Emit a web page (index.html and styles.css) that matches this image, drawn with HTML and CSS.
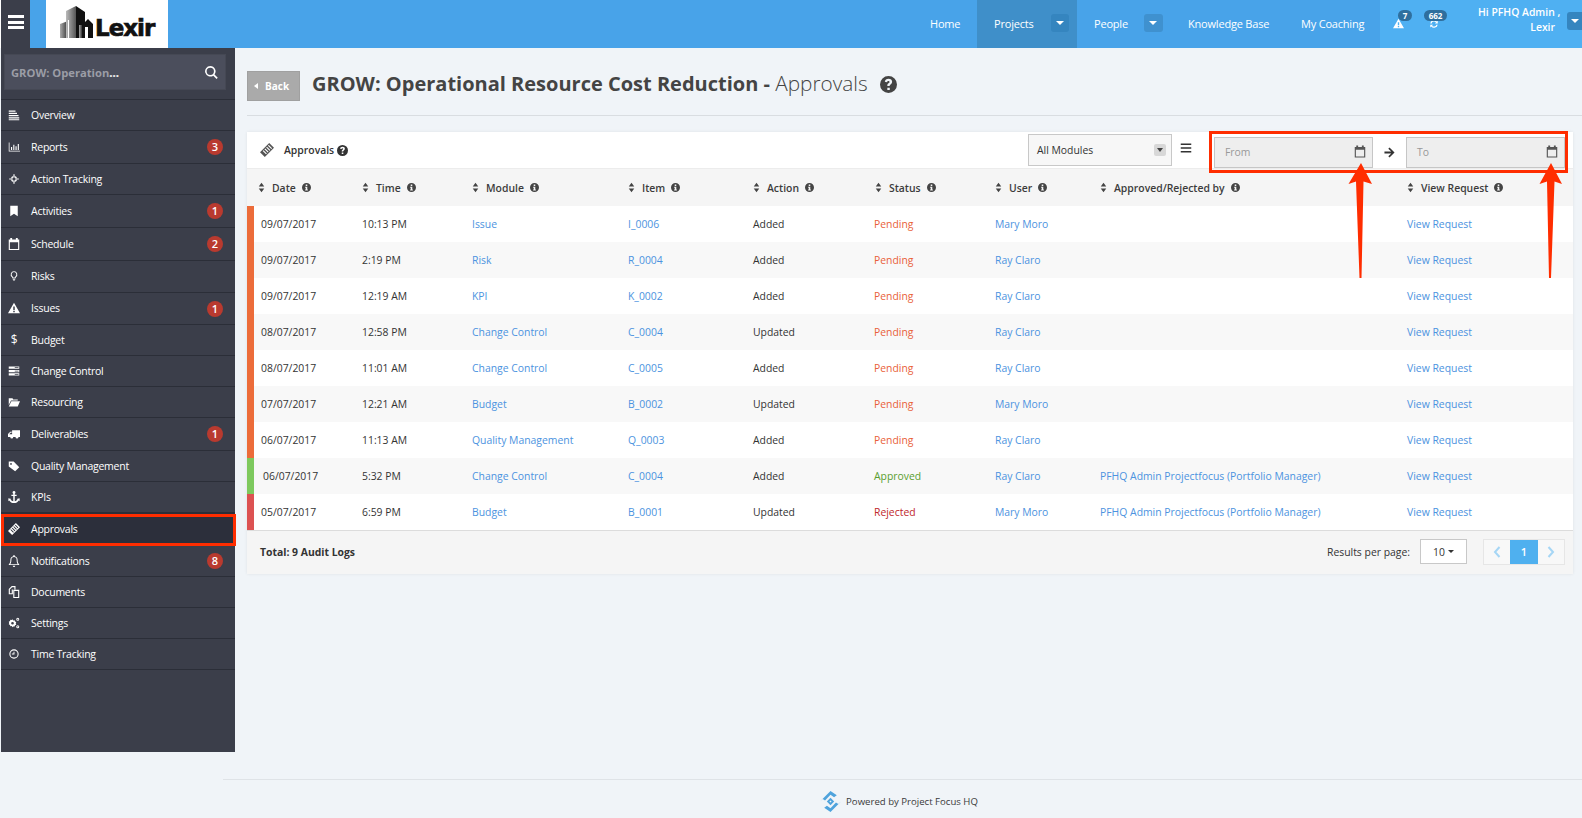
FILE: index.html
```html
<!DOCTYPE html>
<html lang="en">
<head>
<meta charset="utf-8">
<title>Approvals</title>
<link rel="stylesheet" href="styles.css">
</head>
<body>
<svg class="defs" width="0" height="0" aria-hidden="true">
  <defs>
    <linearGradient id="g-tower" x1="0" y1="0" x2="1" y2="0"><stop offset="0" stop-color="#bbb"/><stop offset="1" stop-color="#555"/></linearGradient>
    <linearGradient id="g-small" x1="0" y1="0" x2="1" y2="0"><stop offset="0" stop-color="#aaa"/><stop offset="1" stop-color="#333"/></linearGradient>
  </defs>
  <symbol id="i-info" viewBox="0 0 16 16"><path fill-rule="evenodd" d="M8 0a8 8 0 1 1 0 16A8 8 0 0 1 8 0zM6.600 2.600v2.600h2.800V2.600zM5.600 6.600v1.800h1v3H5.600v1.900h4.800v-1.900h-1V6.600z"/></symbol>
  <symbol id="i-help" viewBox="0 0 16 16"><path fill-rule="evenodd" d="M8 0a8 8 0 1 1 0 16A8 8 0 0 1 8 0zM6.900 11v2.200h2.300V11zM8 2.700c-2 0-3.200 1-3.500 2.700l2.100.5c.2-.9.6-1.300 1.300-1.300s1.100.4 1.100 1c0 .5-.3.8-1 1.300-.9.7-1.100 1.300-1.100 2.200v.4h2.200V9.200c0-.5.2-.7.8-1.200.9-.7 1.500-1.400 1.500-2.600 0-1.700-1.300-2.700-3.400-2.700z"/></symbol>
  <symbol id="i-sort" viewBox="0 0 10 16"><path d="M5 1l4 5.500H1zM5 15L1 9.500h8z"/></symbol>
  <symbol id="i-tag" viewBox="0 0 16 16"><path fill-rule="evenodd" d="M10.500 0L16 5.500 5.500 16 0 10.500zM10 2.200L9.100 3.100l3.800 3.800.9-.9zM8 4.200l-.9.9 3.800 3.800.9-.9zM6 6.200l-.9.9 3.800 3.800.9-.9zM4 8.200l-.9.9 3.800 3.800.9-.9z"/></symbol>
  <symbol id="i-cal" viewBox="0 0 16 16"><path fill-rule="evenodd" d="M3 0h2.500v2h5V0H13v2h2v14H1V2h2zM2.500 5.500v9h11v-9z"/></symbol>
  <symbol id="i-list" viewBox="0 0 16 16"><path d="M1 2h14v2H1zM1 7h14v2H1zM1 12h14v2H1z"/></symbol>
  <symbol id="i-overview" viewBox="0 0 16 16"><path d="M1 2h9v1.500H1zM1 5h11v1.500H1zM1 8h13v1.500H1zM1 11h14v1.500H1zM1 13.500h14V15H1z"/></symbol>
  <symbol id="i-chart" viewBox="0 0 16 16"><path d="M1 2h1v11h14v1H1zM4 8h1.500v4H4zM7 5h1.500v7H7zM10 7h1.500v5H10zM13 4h1.500v8H13z"/></symbol>
  <symbol id="i-target" viewBox="-2 -2 20 20"><path fill-rule="evenodd" d="M8 3a5 5 0 1 1 0 10A5 5 0 0 1 8 3zm0 2.200a2.800 2.800 0 1 0 0 5.600 2.800 2.800 0 0 0 0-5.600zM7 0h2v4H7zM7 12h2v4H7zM0 7h4v2H0zM12 7h4v2h-4z"/></symbol>
  <symbol id="i-bookmark" viewBox="0 0 16 16"><path d="M3 1h10v14l-5-3.500L3 15z"/></symbol>
  <symbol id="i-bulb" viewBox="-2 -2 20 20"><path fill-rule="evenodd" d="M8 0a5.500 5.500 0 0 1 3.200 10l-.7 2h-5l-.7-2A5.500 5.500 0 0 1 8 0zm0 1.500a4 4 0 0 0-2.200 7.300l.8 1.700h2.800l.8-1.700A4 4 0 0 0 8 1.500zM6 13h4v1.200H6zM7 14.600h2V16H7z"/></symbol>
  <symbol id="i-warn" viewBox="0 0 16 16"><path fill-rule="evenodd" d="M8 1l8 14H0zM7 6v4.500h2V6zM7 11.500v2h2v-2z"/></symbol>
  <symbol id="i-bars" viewBox="0 0 16 16"><path fill-rule="evenodd" d="M1 2h14v3H1zM1 6.500h14v3H1zM1 11h14v3H1zM9 3v1h5V3zM9 7.500v1h5v-1zM9 12v1h5v-1z"/></symbol>
  <symbol id="i-folder" viewBox="0 0 16 16"><path d="M1 3h5l1 1.500h6V6H4L1 12zM4.500 7H16l-3 7H1z"/></symbol>
  <symbol id="i-truck" viewBox="0 0 16 16"><path fill-rule="evenodd" d="M5.500 3H16v9h-2a2 2 0 0 1-4 0H7a2 2 0 0 1-4 0H0V8l3-3h2.500zM4 6L1.500 8.300H5.500V6z"/></symbol>
  <symbol id="i-label" viewBox="0 0 16 16"><path fill-rule="evenodd" d="M1 2h6.500L15 9.500 9.500 15 1 8.500zM4 4a1.200 1.200 0 1 0 0 2.400A1.200 1.200 0 0 0 4 4z"/></symbol>
  <symbol id="i-anchor" viewBox="0 0 16 16"><path fill-rule="evenodd" d="M8 0a2 2 0 0 1 1 3.700V5h2.500v1.500H9v7c1.700-.2 3-1 3.700-2.200L11.500 10.500 15.500 9.500v4l-1.200-.9C13.200 14.800 10.800 16 8 16s-5.200-1.200-6.300-3.400l-1.200.9v-4l4 1-1.200.8C4 12.500 5.300 13.300 7 13.500v-7H4.500V5H7V3.700A2 2 0 0 1 8 0z"/></symbol>
  <symbol id="i-bell" viewBox="0 0 16 16"><path fill-rule="evenodd" d="M8 0c.6 0 1 .4 1 1v.6c2.400.5 3.800 2.300 3.800 4.900 0 3.700 1.200 4.900 2.200 6v.8H1v-.8c1-1.100 2.200-2.300 2.200-6 0-2.600 1.400-4.400 3.800-4.900V1c0-.6.400-1 1-1zm0 2.800c-2.200 0-3.500 1.400-3.500 3.700 0 2.700-.6 4.400-1.500 5.700h10c-.9-1.300-1.500-3-1.500-5.700 0-2.300-1.300-3.700-3.500-3.700zM6.300 14.200h3.400a1.700 1.700 0 0 1-3.400 0z"/></symbol>
  <symbol id="i-docs" viewBox="0 0 16 16"><path fill-rule="evenodd" d="M5 0h5v4.500H6.500V11H1V4zM5.500 1.500L2.500 4.700V9.500h2.500V4.500H8.500v-3zM7 5h8v11H7zM8.500 6.500v8h5v-8z"/></symbol>
  <symbol id="i-gears" viewBox="0 0 16 16"><path fill-rule="evenodd" d="M6 3l1 1.500 1.800-.3.600 1.700 1.600.9-.6 1.700.6 1.700-1.600.9-.6 1.700-1.800-.3L6 13.500l-1-1.500-1.800.3-.6-1.700L1 9.700 1.600 8 1 6.300l1.600-.9.600-1.700L5 4zm0 3.500a1.800 1.800 0 1 0 0 3.600 1.800 1.800 0 0 0 0-3.600zM13 1a2 2 0 1 1 0 4 2 2 0 0 1 0-4zm0 1.200a.8.800 0 1 0 0 1.600.8.800 0 0 0 0-1.600zM13 11a2 2 0 1 1 0 4 2 2 0 0 1 0-4zm0 1.200a.8.800 0 1 0 0 1.600.8.800 0 0 0 0-1.600z"/></symbol>
  <symbol id="i-clock" viewBox="-1 -1 18 18"><path fill-rule="evenodd" d="M8 1a7 7 0 1 1 0 14A7 7 0 0 1 8 1zm0 1.600a5.400 5.400 0 1 0 0 10.800A5.400 5.400 0 0 0 8 2.600zM7.300 4.500h1.400v4.200H4.800V7.400h2.500z"/></symbol>
  <symbol id="i-search" viewBox="0 0 16 16"><path fill-rule="evenodd" d="M6.500 0a6.500 6.500 0 0 1 5.200 10.400l4 4-1.500 1.500-4-4A6.500 6.500 0 1 1 6.500 0zm0 2a4.500 4.500 0 1 0 0 9 4.500 4.500 0 0 0 0-9z"/></symbol>
  <symbol id="i-refresh" viewBox="0 0 16 16"><path d="M8 2a6 6 0 0 1 4.500 2L14 2.500V7H9.500l1.600-1.600A4 4 0 0 0 4.200 7H2.100A6 6 0 0 1 8 2zM2 9h4.500l-1.600 1.600A4 4 0 0 0 11.800 9h2.100A6 6 0 0 1 3.500 12L2 13.500z"/></symbol>
</svg>

<header class="topbar">
  <button class="burger" type="button" aria-label="Menu"><span></span><span></span><span></span></button>
  <div class="logo">
    <svg class="logo-mark" viewBox="0 0 33 32" width="33" height="32">
      <path fill="url(#g-small)" d="M0 18l8-3v17H0z"/>
      <path fill="url(#g-tower)" d="M6 5l10-5v32H6z"/>
      <path fill="#111" d="M16 0l9 6v10l3-3 5 5v14h-5V21h-3v11h-9z"/>
      <path fill="url(#g-small)" d="M19 19h3v13h-3z"/>
      <path fill="#fff" d="M8 14h1v18H8z"/>
    </svg>
    <span class="logo-text">Lexir</span>
  </div>
  <nav class="mainnav">
    <a class="nav-home">Home</a>
    <a class="nav-projects">Projects<span class="caret-btn"></span></a>
    <a class="nav-people">People<span class="caret-btn"></span></a>
    <a class="nav-kb">Knowledge Base</a>
    <a class="nav-coach">My Coaching</a>
  </nav>
  <div class="userzone">
    <div class="notif notif-alert"><svg class="ic-notif"><use href="#i-warn"/></svg><span class="pill">7</span></div>
    <div class="notif notif-sync"><svg class="ic-notif"><use href="#i-refresh"/></svg><span class="pill">662</span></div>
    <div class="hello">Hi PFHQ Admin ,<br>Lexir</div>
    <span class="caret-btn user-caret"></span>
  </div>
</header>

<div class="middle">
  <aside class="sidebar">
    <div class="searchwrap">
      <div class="search"><span class="search-text">GROW: Operation<b>...</b></span><svg class="ic-search"><use href="#i-search"/></svg></div>
    </div>
    <ul class="menu">
      <li class="h31"><svg><use href="#i-overview"/></svg>Overview</li>
      <li class="h33"><svg><use href="#i-chart"/></svg>Reports<span class="badge">3</span></li>
      <li class="h31"><svg><use href="#i-target"/></svg>Action Tracking</li>
      <li class="h33"><svg><use href="#i-bookmark"/></svg>Activities<span class="badge">1</span></li>
      <li class="h33"><svg><use href="#i-cal"/></svg>Schedule<span class="badge">2</span></li>
      <li class="h32"><svg><use href="#i-bulb"/></svg>Risks</li>
      <li class="h32"><svg><use href="#i-warn"/></svg>Issues<span class="badge">1</span></li>
      <li class="h31"><span class="glyph">$</span>Budget</li>
      <li class="h31"><svg><use href="#i-bars"/></svg>Change Control</li>
      <li class="h31"><svg><use href="#i-folder"/></svg>Resourcing</li>
      <li class="h33"><svg><use href="#i-truck"/></svg>Deliverables<span class="badge">1</span></li>
      <li class="h31"><svg><use href="#i-label"/></svg>Quality Management</li>
      <li class="h31"><svg><use href="#i-anchor"/></svg>KPIs</li>
      <li class="h33 active"><svg><use href="#i-tag"/></svg>Approvals</li>
      <li class="h31"><svg><use href="#i-bell"/></svg>Notifications<span class="badge">8</span></li>
      <li class="h31"><svg><use href="#i-docs"/></svg>Documents</li>
      <li class="h31"><svg><use href="#i-gears"/></svg>Settings</li>
      <li class="h31"><svg><use href="#i-clock"/></svg>Time Tracking</li>
    </ul>
  </aside>

  <main class="main">
    <div class="pagehead">
      <button class="back" type="button"><i class="back-caret"></i>Back</button>
      <h1 class="title"><b>GROW: Operational Resource Cost Reduction -</b> <span class="title-page">Approvals</span></h1>
      <svg class="ic-title"><use href="#i-help"/></svg>
    </div>

    <section class="card">
      <div class="cardhead">
        <svg class="ic-head"><use href="#i-tag"/></svg>
        <span class="cardtitle">Approvals</span>
        <svg class="ic-help"><use href="#i-help"/></svg>
        <div class="spacer"></div>
        <div class="select">All Modules<span class="select-caret"></span></div>
        <svg class="ic-list"><use href="#i-list"/></svg>
        <div class="dates">
          <div class="dateinput">From<svg><use href="#i-cal"/></svg></div>
          <svg class="ic-arrow" viewBox="0 0 12 12"><path d="M6 .5L11.500 6 6 11.500 4.700 10.200 7.900 7H.5V5h7.400L4.700 1.800z"/></svg>
          <div class="dateinput">To<svg><use href="#i-cal"/></svg></div>
        </div>
      </div>

      <div class="row thead">
        <div><svg class="s"><use href="#i-sort"/></svg>Date<svg class="n"><use href="#i-info"/></svg></div>
        <div><svg class="s"><use href="#i-sort"/></svg>Time<svg class="n"><use href="#i-info"/></svg></div>
        <div><svg class="s"><use href="#i-sort"/></svg>Module<svg class="n"><use href="#i-info"/></svg></div>
        <div><svg class="s"><use href="#i-sort"/></svg>Item<svg class="n"><use href="#i-info"/></svg></div>
        <div><svg class="s"><use href="#i-sort"/></svg>Action<svg class="n"><use href="#i-info"/></svg></div>
        <div><svg class="s"><use href="#i-sort"/></svg>Status<svg class="n"><use href="#i-info"/></svg></div>
        <div><svg class="s"><use href="#i-sort"/></svg>User<svg class="n"><use href="#i-info"/></svg></div>
        <div><svg class="s"><use href="#i-sort"/></svg>Approved/Rejected by<svg class="n"><use href="#i-info"/></svg></div>
        <div><svg class="s"><use href="#i-sort"/></svg>View Request<svg class="n"><use href="#i-info"/></svg></div>
      </div>

      <div class="row body pending"><div>09/07/2017</div><div>10:13 PM</div><a>Issue</a><a>I_0006</a><div>Added</div><div class="st">Pending</div><a>Mary Moro</a><a></a><a>View Request</a></div>
      <div class="row body pending"><div>09/07/2017</div><div>2:19 PM</div><a>Risk</a><a>R_0004</a><div>Added</div><div class="st">Pending</div><a>Ray Claro</a><a></a><a>View Request</a></div>
      <div class="row body pending"><div>09/07/2017</div><div>12:19 AM</div><a>KPI</a><a>K_0002</a><div>Added</div><div class="st">Pending</div><a>Ray Claro</a><a></a><a>View Request</a></div>
      <div class="row body pending"><div>08/07/2017</div><div>12:58 PM</div><a>Change Control</a><a>C_0004</a><div>Updated</div><div class="st">Pending</div><a>Ray Claro</a><a></a><a>View Request</a></div>
      <div class="row body pending"><div>08/07/2017</div><div>11:01 AM</div><a>Change Control</a><a>C_0005</a><div>Added</div><div class="st">Pending</div><a>Ray Claro</a><a></a><a>View Request</a></div>
      <div class="row body pending"><div>07/07/2017</div><div>12:21 AM</div><a>Budget</a><a>B_0002</a><div>Updated</div><div class="st">Pending</div><a>Mary Moro</a><a></a><a>View Request</a></div>
      <div class="row body pending"><div>06/07/2017</div><div>11:13 AM</div><a>Quality Management</a><a>Q_0003</a><div>Added</div><div class="st">Pending</div><a>Ray Claro</a><a></a><a>View Request</a></div>
      <div class="row body approved"><div class="nudge">06/07/2017</div><div>5:32 PM</div><a>Change Control</a><a>C_0004</a><div>Added</div><div class="st">Approved</div><a>Ray Claro</a><a>PFHQ Admin Projectfocus (Portfolio Manager)</a><a>View Request</a></div>
      <div class="row body rejected"><div>05/07/2017</div><div>6:59 PM</div><a>Budget</a><a>B_0001</a><div>Updated</div><div class="st">Rejected</div><a>Mary Moro</a><a>PFHQ Admin Projectfocus (Portfolio Manager)</a><a>View Request</a></div>

      <div class="cardfoot">
        <b class="total">Total: 9 Audit Logs</b>
        <div class="spacer"></div>
        <span class="rpp">Results per page:</span>
        <div class="perpage">10<i class="mini-caret"></i></div>
        <div class="pager">
          <span class="pg pg-arrow"><svg viewBox="0 0 8 12"><path d="M6.500 1L2 6l4.500 5"/></svg></span>
          <span class="pg pg-on">1</span>
          <span class="pg pg-arrow"><svg viewBox="0 0 8 12"><path d="M1.500 1L6 6l-4.500 5"/></svg></span>
        </div>
      </div>
    </section>
  </main>
</div>

<footer class="foot">
  <svg class="foot-logo" viewBox="0 0 20 20" width="21" height="21">
    <path fill="#4fa3dc" d="M10 0l6 4-2.600 2L10 3.600 4.800 9 2.600 7.600 0 10zM10 20l-6-4 2.600-2 3.400 2.400 5.200-5.400 2.200 1.400L20 10z"/>
    <path fill="#4fa3dc" d="M10 6.500l3.500 3.500-3.500 3.500L6.500 10z"/>
    <path fill="#f0f4f8" d="M10 9l1 1-1 1-1-1z"/>
  </svg>
  <span>Powered by Project Focus HQ</span>
</footer>

<div class="annot annot-box"></div>
<svg class="annot annot-arrows" viewBox="0 0 1582 818" width="1582" height="818" aria-hidden="true">
  <path fill="#ff2d00" d="M1361 163l11 21-8.500-2.500-2 96.500h-2l-3.500-96.500-7.500 2.500z"/>
  <path fill="#ff2d00" d="M1551 163l11 21-7.500-2.500-3.500 96.500h-2l-2-96.500-7.500 2.500z"/>
</svg>
</body>
</html>
```

FILE: styles.css
```css
* { box-sizing: border-box; }
html, body { margin: 0; padding: 0; }
body {
  width: 1582px;
  height: 818px;
  overflow: hidden;
  position: relative;
  display: flex;
  flex-direction: column;
  background: #f0f4f8;
  font-family: "Open Sans", "Liberation Sans", sans-serif;
  font-size: 10.4px;
  color: #333;
}
.defs { position: absolute; }
svg { fill: currentColor; display: block; flex: none; }

/* Top bar */
.topbar {
  height: 48px;
  flex: none;
  display: flex;
  align-items: stretch;
  background: #48a3e9;
  color: #fff;
  padding-left: 1px;
  box-shadow: inset 1px 0 0 #fff;
}
.burger {
  width: 29px;
  background: #3b3e4a;
  border: 0;
  padding: 0 0 4px;
  display: flex;
  flex-direction: column;
  align-items: center;
  justify-content: center;
  gap: 2.500px;
}
.burger span { width: 16px; height: 3px; background: #fff; }
.logo {
  margin-left: 16px;
  width: 122px;
  background: #fff;
  display: flex;
  align-items: flex-end;
  padding: 0 0 10px 14px;
  color: #111;
}
.logo-text {
  font-family: "DejaVu Sans", sans-serif;
  font-weight: 700;
  font-size: 23px;
  line-height: 20px;
  letter-spacing: -1px;
  margin-left: 2px;
  -webkit-text-stroke: .7px #111;
}
.mainnav { flex: 1; display: flex; justify-content: flex-end; align-items: stretch; font-size: 11px; letter-spacing: -.2px; }
.mainnav a { display: flex; align-items: center; font-weight: 500; padding-bottom: 2px; }
.nav-home { width: 47px; }
.nav-projects { width: 100px; padding-left: 17px; background: #3f8fc9; }
.nav-people { width: 93px; padding-left: 17px; }
.nav-kb { width: 130px; padding-left: 18px; }
.nav-coach { width: 80px; padding-left: 1px; }
.caret-btn {
  width: 18px;
  height: 18px;
  border-radius: 3px;
  background: #3585bf;
  position: relative;
  display: block;
}
.caret-btn::after {
  content: "";
  position: absolute;
  left: 5px;
  top: 7px;
  border: 4px solid transparent;
  border-top-color: #fff;
  border-bottom: 0;
}
.nav-projects .caret-btn { margin-left: 17px; }
.nav-people .caret-btn { margin-left: 16px; background: #3f91cf; width: 19px; }
.userzone {
  width: 202px;
  background: #4fb0f2;
  display: flex;
  align-items: flex-start;
  position: relative;
  flex: none;
}
.notif { position: relative; height: 48px; }
.notif-alert { width: 44px; }
.notif-sync { width: 54px; }
.ic-notif { width: 11px; height: 11px; position: absolute; left: 13px; top: 18px; }
.notif-sync .ic-notif { left: 5px; top: 19px; width: 10px; height: 10px; }
.pill {
  position: absolute;
  top: 10px;
  background: #2f6f9e;
  color: #fff;
  border-radius: 6px;
  height: 11px;
  line-height: 11px;
  font-size: 8px;
  font-weight: 700;
  text-align: center;
}
.notif-alert .pill { left: 18px; width: 14px; }
.notif-sync .pill { left: 0; width: 23px; }
.hello { width: 77px; text-align: right; font-size: 10.4px; font-weight: 600; line-height: 15px; padding-top: 5px; white-space: nowrap; }
.caret-btn.user-caret { position: absolute; right: 0; top: 12px; width: 15px; border-radius: 3px 0 0 3px; }
.caret-btn.user-caret::after { left: 4px; }

/* Middle */
.middle { flex: 1; display: flex; min-height: 0; padding-left: 1px; }
.sidebar {
  width: 234px;
  height: 704px;
  flex: none;
  background: #3b3e4a;
  color: #fff;
}
.searchwrap { height: 51px; padding: 6px 9px 0 3px; }
.search {
  height: 36px;
  background: #4b4e5c;
  box-shadow: 0 0 0 1px #454854 inset;
  display: flex;
  align-items: center;
  justify-content: space-between;
  padding: 0 8px 0 7px;
  color: #9b9da6;
  font-weight: 700;
  font-size: 11.2px;
}
.search-text b { color: #e6e6e6; }
.ic-search { width: 13px; height: 13px; color: #fff; }
.menu { list-style: none; margin: 0; padding: 0; border-top: 1px solid #2b2e38; }
.menu li {
  display: flex;
  align-items: center;
  padding: 0 0 1px 7px;
  font-size: 10.5px;
  border-bottom: 1px solid #2b2e38;
  position: relative;
  letter-spacing: -.25px;
}
.menu li > svg { width: 12px; height: 12px; margin-right: 11px; }
.glyph { width: 12px; margin-right: 11px; text-align: center; font-size: 12px; }
.h31 { height: 31px; }
.h32 { height: 32px; }
.h33 { height: 33px; }
.menu li.active { background: #2c2f3b; }
.menu li.active::after {
  content: "";
  position: absolute;
  left: 0;
  right: -1px;
  top: 1px;
  bottom: -1px;
  border: 3px solid #ff2d00;
}
.badge {
  position: absolute;
  left: 206px;
  top: 50%;
  margin-top: -8px;
  width: 16px;
  height: 16px;
  border-radius: 50%;
  background: #b93a2f;
  text-align: center;
  font-size: 11px;
  line-height: 16px;
  font-weight: 600;
  letter-spacing: 0;
}

/* Main */
.main { flex: 1; min-width: 0; padding: 0 9px 0 12px; }
.pagehead {
  height: 68px;
  margin: 0 -9px 0 0;
  border-bottom: 1px solid #d9dde1;
  display: flex;
  align-items: center;
  padding-top: 3px;
}
.back {
  width: 53px;
  height: 30px;
  margin-top: 5px;
  background: #aaa;
  border: 1px solid #a0a0a0;
  color: #fff;
  font: 700 10px "Open Sans", sans-serif;
  display: flex;
  align-items: center;
  padding: 0 0 0 6px;
}
.back-caret { border: 3.500px solid transparent; border-right: 4px solid #fff; border-left: 0; margin-right: 7px; }
.title { margin: 0 0 0 12px; font-size: 20px; font-weight: 300; color: #444; white-space: nowrap; line-height: 26px; }
.title b { font-weight: 700; }
.title-page { font-size: 20.800px; }
.ic-title { width: 17px; height: 17px; margin: 2px 0 0 12px; color: #444; }

.card {
  margin-top: 16px;
  width: 1326px;
  background: #fff;
  box-shadow: 0 0 3px rgba(0, 0, 0, .08);
}
.cardhead {
  height: 36px;
  display: flex;
  align-items: center;
  padding-left: 13px;
  position: relative;
}
.ic-head { width: 14px; height: 14px; color: #555; margin-right: 10px; }
.cardtitle { font-weight: 600; font-size: 10.4px; }
.ic-help { width: 11px; height: 11px; margin-left: 3px; color: #333; }
.spacer { flex: 1; }
.select {
  width: 144px;
  height: 32px;
  border: 1px solid #c8c8c8;
  background: #f7f7f7;
  display: flex;
  align-items: center;
  padding-left: 8px;
  position: relative;
}
.select-caret { position: absolute; right: 5px; top: 9px; width: 12px; height: 12px; background: #d8d8d8; border-radius: 2px; }
.select-caret::after {
  content: "";
  position: absolute;
  left: 3px;
  top: 4px;
  border: 3px solid transparent;
  border-top: 4px solid #444;
  border-bottom: 0;
}
.ic-list { width: 12px; height: 12px; margin: -5px 0 0 8px; color: #333; }
.dates { display: flex; align-items: center; margin: 4px 8px 0 22px; }
.dateinput {
  width: 159px;
  height: 31px;
  background: #eee;
  border: 1px solid #c6c6c6;
  color: #999;
  display: flex;
  align-items: center;
  justify-content: space-between;
  padding: 0 6px 0 10px;
}
.dateinput svg { width: 12px; height: 13px; color: #555; margin-top: -1px; }
.ic-arrow { width: 11px; height: 11px; margin: 0 11px; color: #333; }

.row {
  display: grid;
  grid-template-columns: 101px 110px 156px 125px 121px 121px 105px 307px 1fr;
  align-items: center;
  height: 36px;
}
.thead {
  height: 38px;
  background: #f5f5f5;
  border-top: 1px solid #ececec;
  padding-left: 11px;
  grid-template-columns: 104px 110px 156px 125px 122px 120px 105px 307px 1fr;
  font-weight: 600;
  color: #3c3c3c;
}
.thead > div { display: flex; align-items: center; white-space: nowrap; }
.thead .s { width: 7px; height: 11px; margin-right: 7px; color: #444; }
.thead .n { width: 9px; height: 9px; margin-left: 6px; color: #444; }
.body { border-left: 7px solid #ec6c3a; padding-left: 7px; background: #fff; }
.body:nth-of-type(even) { background: #f8f8f8; }
.body a { color: #4c93e0; white-space: nowrap; }
.pending .st { color: #e95f3a; }
.approved { border-left-color: #7dc95e; }
.approved .st { color: #5a9e2f; }
.rejected { border-left-color: #dc5252; }
.rejected .st { color: #c0272d; }
.nudge { padding-left: 2px; }

.cardfoot {
  height: 44px;
  background: #f5f5f5;
  border-top: 1px solid #dcdcdc;
  display: flex;
  align-items: center;
  padding: 0 8px 2px 13px;
}
.total { font-weight: 700; color: #333; }
.rpp { margin-right: 10px; }
.perpage {
  width: 47px;
  height: 25px;
  border: 1px solid #c8c8c8;
  background: #fff;
  display: flex;
  align-items: center;
  justify-content: center;
  margin-right: 16px;
}
.mini-caret { border: 3px solid transparent; border-top: 3px solid #333; border-bottom: 0; margin-left: 3px; }
.pager { display: flex; height: 26px; border: 1px solid #e6e6e6; }
.pg { width: 26px; display: flex; align-items: center; justify-content: center; background: #f8f8f8; }
.pg-on { width: 28px; background: #4fb0ef; color: #fff; font-weight: 600; font-size: 11px; }
.pg-arrow svg { width: 8px; height: 12px; fill: none; stroke: #a6d6f5; stroke-width: 2; }

/* Footer */
.foot {
  height: 39px;
  flex: none;
  margin-left: 223px;
  border-top: 1px solid #dfe3e7;
  display: flex;
  align-items: center;
  justify-content: center;
  gap: 5px;
  padding: 5px 7px 0 0;
  font-size: 9.600px;
  color: #3a3a3a;
}

/* Red annotations drawn over the screenshot */
.annot { position: absolute; pointer-events: none; }
.annot-box { left: 1209px; top: 131px; width: 359px; height: 42px; border: 3px solid #ff2d00; }
.annot-arrows { left: 0; top: 0; }
```
